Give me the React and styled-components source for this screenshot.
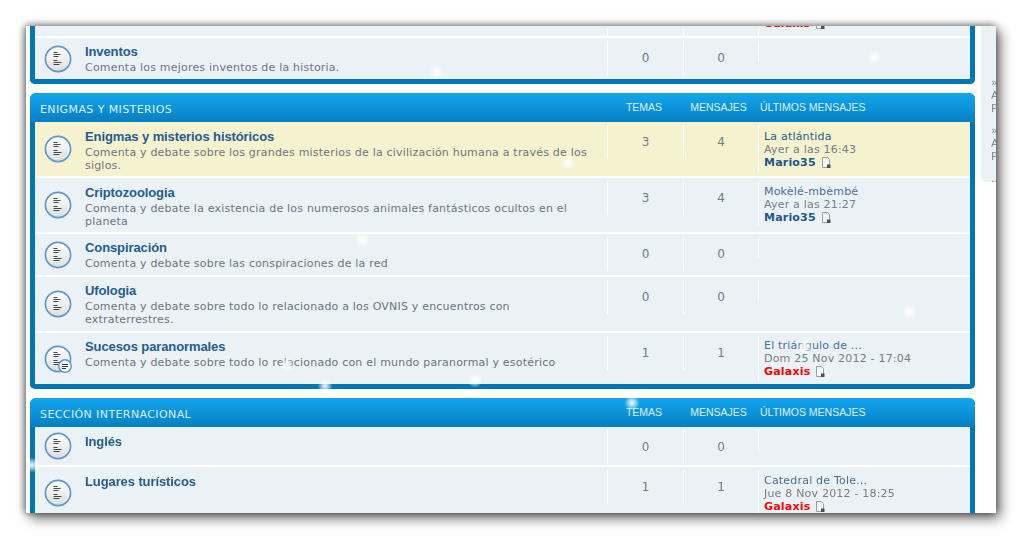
import React from 'react';
import styled, {createGlobalStyle} from "styled-components";

const Global = createGlobalStyle`
  html, body {
    margin: 0;
    padding: 0;
    background: #FFFFFF;
  }
  body {
    width: 1022px;
    height: 538px;
    overflow: hidden;
    font-family: "DejaVu Sans", Verdana, sans-serif;
  }
`
const Page = styled.div`
  padding: 26px 26px 25px 26px;
`
const Window = styled.div`
  position: relative;
  display: flex;
  width: 970px;
  height: 487px;
  overflow: hidden;
  background: #FFFFFF;
  box-shadow: 4px 5px 12px rgba(0, 0, 0, .6), -2px 0 7px rgba(0, 0, 0, .4), 0 -2px 8px rgba(0, 0, 0, .18);
  filter: blur(.35px);
`
const Main = styled.div`
  display: flex;
  flex-direction: column;
  gap: 9px;
  width: 945px;
  margin-left: 4px;
  flex-shrink: 0;
`
const Panel = styled.section`
  border: solid #0077B3;
  border-width: 0 5px 5px 5px;
  border-radius: ${p => p.$open ? "0 0 5px 5px" : "6px 6px 5px 5px"};
  flex-shrink: 0;
`
const Header = styled.div`
  display: grid;
  grid-template-columns: 572px 76px 75px 1fr;
  align-items: center;
  height: 29px;
  margin: 0 -5px;
  padding: 0 5px;
  border-radius: 6px 6px 0 0;
  background: linear-gradient(#14A6EE, #057FC3);
  color: #DDF1FD;
`
const Section = styled.h2`
  margin: 3px 0 0 5px;
  font-size: 11px;
  font-weight: 400;
  letter-spacing: .4px;
  text-transform: uppercase;
  white-space: nowrap;
`
const HeadCell = styled.div`
  margin-top: -1px;
  padding: ${p => p.$pad || "0"};
  font-family: "Liberation Sans", Arial, sans-serif;
  font-size: 10.5px;
  text-transform: uppercase;
  text-align: ${p => p.$left ? "left" : "center"};
  white-space: nowrap;
`
const Rows = styled.div`
  display: flex;
  flex-direction: column;
  gap: 2px;
  background: #FFFFFF;
`
const Row = styled.div`
  display: grid;
  grid-template-columns: 572px 76px 75px 1fr;
  height: ${p => p.$height}px;
  overflow: hidden;
  background: ${p => p.$hot ? "#F5F2CF" : "#EBF2F6"};
`
const Topic = styled.div`
  display: flex;
  align-items: center;
  padding-left: 9px;
`
const IconSlot = styled.div`
  width: 41px;
  flex-shrink: 0;
  display: flex;
`
const Text = styled.div`
  align-self: flex-start;
  padding-top: ${p => p.$tight ? 6 : 7}px;
`
const Title = styled.div`
  margin-bottom: 1px;
  font-family: "Liberation Sans", Arial, sans-serif;
  font-size: 13px;
  font-weight: 700;
  line-height: 16px;
  letter-spacing: -.1px;
  color: #245C8E;
`
const Desc = styled.div`
  font-size: 11px;
  line-height: 13px;
  letter-spacing: .2px;
  color: #6E7480;
`
const Stat = styled.div`
  align-self: start;
  height: 34px;
  margin-top: 3px;
  border-left: 1px solid #FFFFFF;
  line-height: 34px;
  font-size: 12px;
  text-align: center;
  color: #71798C;
`
const Last = styled.div`
  align-self: start;
  min-height: 21px;
  margin-top: 3px;
  padding: ${p => p.$top}px 0 2px 5px;
  border-left: 1px solid #FFFFFF;
  font-size: 11px;
  line-height: 13px;
  letter-spacing: .2px;
  color: #777C86;
  box-sizing: border-box;
  white-space: nowrap;
`
const PostLink = styled.div`
  color: ${p => p.$hot ? "#245C8E" : "#46709A"};
`
const Author = styled.div`
  display: flex;
  align-items: center;
  gap: 5px;
  font-weight: 700;
  color: ${p => p.$red ? "#FF0000" : "#1E5690"};
`
const Cut = styled.div`
  margin-top: -17px;
`
const Side = styled.aside`
  display: flex;
  flex-direction: column;
  width: 15px;
  height: 156px;
  margin-left: 6px;
  padding: 50px 0 0 10px;
  box-sizing: border-box;
  overflow: hidden;
  background: #EBF2F6;
  border-radius: 0 0 0 6px;
  font-size: 11px;
  line-height: 13px;
  color: #7D8A97;
`
const SideGroup = styled.div`
  margin-bottom: 9px;
`
const Sparkle = styled.span`
  position: absolute;
  left: ${p => p.$x - 26 - 8}px;
  top: ${p => p.$y - 26 - 8}px;
  width: 16px;
  height: 16px;
  border-radius: 50%;
  background: radial-gradient(circle, rgba(255, 255, 255, .95) 0, rgba(255, 255, 255, .7) 22%, rgba(255, 255, 255, 0) 68%);
`

const ForumIcon = ({badge}) => (
    <svg width="28" height="28" viewBox="0 0 28 28">
        <defs>
            <linearGradient id="disc" x1="0" y1="0" x2="0" y2="1">
                <stop offset="0" stopColor="#FFFFFF"/>
                <stop offset="1" stopColor="#DDDEDF"/>
            </linearGradient>
        </defs>
        <circle cx="14" cy="14" r="12.6" fill="url(#disc)" stroke="#5B95CB" strokeWidth="1.6"/>
        <g stroke="#44494D" strokeWidth="1">
            <path d="M9.5 7.5h4M9.5 9.5h7M9.5 11.5h5M9.5 15.5h4M9.5 17.5h8M9.5 19.5h6"/>
        </g>
        {badge && (
            <g>
                <circle cx="21" cy="21" r="6.2" fill="#F4F6F8" stroke="#5B95CB" strokeWidth="1.4"/>
                <path d="M18 19.5h6M18 21.5h6M18 23.5h4" stroke="#333A40" strokeWidth="1"/>
            </g>
        )}
    </svg>
)

const PageIcon = () => (
    <svg width="10" height="11" viewBox="0 0 10 11">
        <path d="M1.5.5h5l2 2v8h-7z" fill="#F4F5F6" stroke="#9A9FA3"/>
        <path d="M6 7.5h3.500V11H6z" fill="#4A4F54"/>
    </svg>
)

const ForumRow = ({title, desc, temas, mensajes, post, date, author, red, hot, badge, height, tight, postTop = 4}) => (
    <Row $height={height} $hot={hot}>
        <Topic>
            <IconSlot><ForumIcon badge={badge}/></IconSlot>
            <Text $tight={tight}>
                <Title>{title}</Title>
                {desc && <Desc>{desc}</Desc>}
            </Text>
        </Topic>
        <Stat>{temas}</Stat>
        <Stat>{mensajes}</Stat>
        <Last $top={postTop}>
            {post && <PostLink $hot={hot}>{post}</PostLink>}
            {date && <div>{date}</div>}
            {author && <Author $red={red}>{author} <PageIcon/></Author>}
        </Last>
    </Row>
)

const enigmas = [
    {
        title: "Enigmas y misterios históricos",
        desc: <>Comenta y debate sobre los grandes misterios de la civilización humana a través de los<br/>siglos.</>,
        temas: 3, mensajes: 4, post: "La atlántida", date: "Ayer a las 16:43", author: "Mario35", hot: true, height: 54, postTop: 5,
    },
    {
        title: "Criptozoologia",
        desc: <>Comenta y debate la existencia de los numerosos animales fantásticos ocultos en el<br/>planeta</>,
        temas: 3, mensajes: 4, post: "Mokèlé-mbèmbé", date: "Ayer a las 21:27", author: "Mario35", height: 54,
    },
    {
        title: "Conspiración",
        desc: "Comenta y debate sobre las conspiraciones de la red",
        temas: 0, mensajes: 0, height: 41, tight: true,
    },
    {
        title: "Ufologia",
        desc: <>Comenta y debate sobre todo lo relacionado a los OVNIS y encuentros con<br/>extraterrestres.</>,
        temas: 0, mensajes: 0, height: 54, tight: true,
    },
    {
        title: "Sucesos paranormales",
        desc: "Comenta y debate sobre todo lo relacionado con el mundo paranormal y esotérico",
        temas: 1, mensajes: 1, post: "El triángulo de ...", date: "Dom 25 Nov 2012 - 17:04", author: "Galaxis", red: true, badge: true, height: 51, tight: true, postTop: 3,
    },
]

const internacional = [
    {title: "Inglés", temas: 0, mensajes: 0, height: 38},
    {
        title: "Lugares turísticos",
        temas: 1, mensajes: 1, post: "Catedral de Tole...", date: "Jue 8 Nov 2012 - 18:25", author: "Galaxis", red: true, height: 51,
    },
]

const sparkles = [
    [437, 72], [874, 57], [568, 162], [362, 240], [910, 312], [325, 386], [287, 365],
    [632, 403], [805, 347], [32, 465], [475, 380],
]

const Head = ({children}) => (
    <Header>
        <Section>{children}</Section>
        <HeadCell $pad="0 2px 0 0">Temas</HeadCell>
        <HeadCell $pad="0 4px 0 0">Mensajes</HeadCell>
        <HeadCell $left $pad="0 0 0 2px">Últimos mensajes</HeadCell>
    </Header>
)

const App = () => (
    <Page>
        <Global/>
        <Window>
            <Main>
                <Panel $open>
                    <Rows>
                        <Row $height={10}>
                            <div/>
                            <Stat/>
                            <Stat/>
                            <Last $top={5}>
                                <Cut><Author $red>Galaxis <PageIcon/></Author></Cut>
                            </Last>
                        </Row>
                        <ForumRow title="Inventos" desc="Comenta los mejores inventos de la historia." temas={0} mensajes={0} height={41} tight/>
                    </Rows>
                </Panel>
                <Panel>
                    <Head>Enigmas y misterios</Head>
                    <Rows>
                        {enigmas.map(forum => <ForumRow key={forum.title} {...forum}/>)}
                    </Rows>
                </Panel>
                <Panel>
                    <Head>Sección internacional</Head>
                    <Rows>
                        {internacional.map(forum => <ForumRow key={forum.title} {...forum}/>)}
                    </Rows>
                </Panel>
            </Main>
            <Side>
                <SideGroup>»<br/>A<br/>P</SideGroup>
                <SideGroup>»<br/>A<br/>P</SideGroup>
                <div>...</div>
            </Side>
            {sparkles.map(([x, y]) => <Sparkle key={x} $x={x} $y={y}/>)}
        </Window>
    </Page>
)

export default App;
